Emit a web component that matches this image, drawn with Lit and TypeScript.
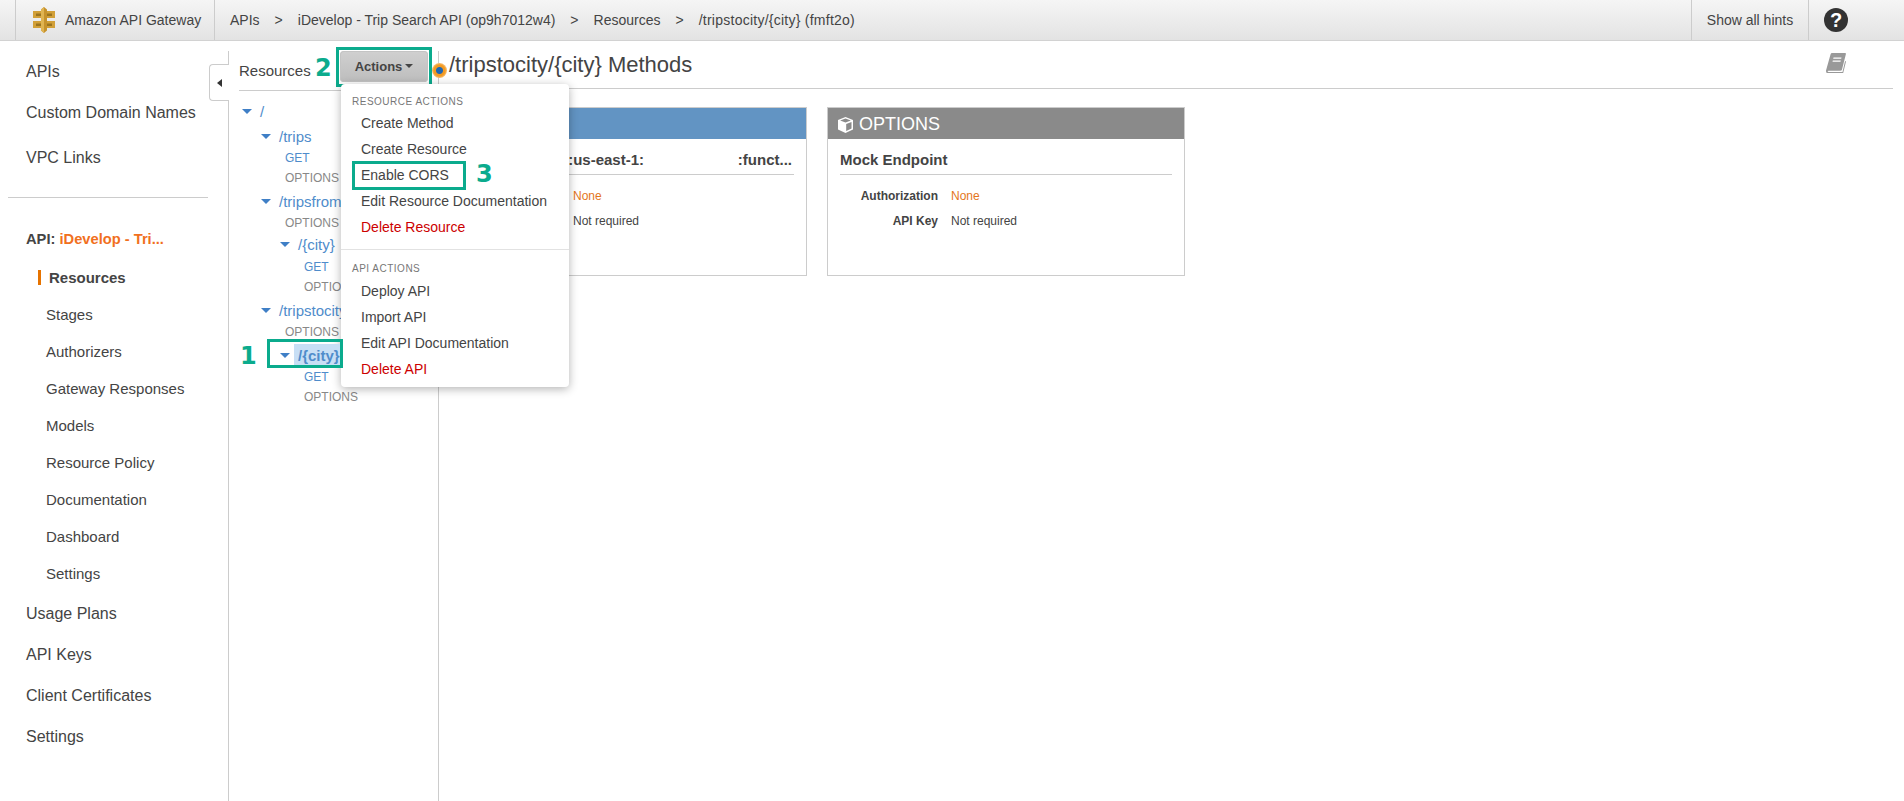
import {LitElement, css, html, nothing} from 'lit';
import {customElement} from 'lit/decorators.js';

interface TreeNode {
  path: string;
  methods: string[];
  children?: TreeNode[];
  selected?: boolean;
}

const TREE: TreeNode = {
  path: '/',
  methods: [],
  children: [
    {path: '/trips', methods: ['GET', 'OPTIONS']},
    {
      path: '/tripsfromcity',
      methods: ['OPTIONS'],
      children: [{path: '/{city}', methods: ['GET', 'OPTIONS']}]
    },
    {
      path: '/tripstocity',
      methods: ['OPTIONS'],
      children: [{path: '/{city}', methods: ['GET', 'OPTIONS'], selected: true}]
    }
  ]
};

const SUB_LINKS = ['Stages', 'Authorizers', 'Gateway Responses', 'Models', 'Resource Policy', 'Documentation', 'Dashboard', 'Settings'];

@customElement('app-root')
export class AppRoot extends LitElement {
  static styles = css`
    :host {
      display: block;
      height: 801px;
      overflow: hidden;
      background: #fff;
      color: #444;
      font-family: "Liberation Sans", Arial, sans-serif;
      font-size: 14px;
    }

    /* top bar */
    .top {
      display: flex;
      align-items: stretch;
      height: 40px;
      border-bottom: 1px solid #d2d2d2;
      background: linear-gradient(#f5f5f5, #e3e3e3);
      color: #444;
    }
    .brand {
      display: flex;
      align-items: center;
      margin-left: 15px;
      padding-left: 17px;
      border-left: 1px solid #ccc;
      border-right: 1px solid #ccc;
      box-sizing: border-box;
      width: 200px;
    }
    .brand svg { margin-right: 10px; }
    .crumbs {
      display: flex;
      align-items: center;
      flex: 1;
      padding-left: 15px;
    }
    .crumbs .sep { margin: 0 15px; }
    .crumbs .path { letter-spacing: 0.25px; }
    .hints {
      display: flex;
      align-items: center;
      justify-content: center;
      width: 116px;
      border-left: 1px solid #ccc;
      border-right: 1px solid #ccc;
    }
    .help {
      display: flex;
      align-items: center;
      justify-content: center;
      width: 24px;
      height: 24px;
      margin: 8px 56px 0 15px;
      border-radius: 50%;
      background: #333;
      color: #fff;
      font-size: 20px;
      font-weight: bold;
    }

    .body {
      display: flex;
      height: 750px;
      margin-top: 10px;
    }

    /* left nav */
    .side {
      position: relative;
      flex: none;
      width: 228px;
      border-right: 1px solid #ccc;
    }
    .link {
      height: 41px;
      line-height: 41px;
      padding-left: 26px;
      font-size: 16px;
    }
    .link.vpc { margin-top: 4px; }
    .link.usage { margin-top: 1px; }
    .side hr {
      height: 1px;
      margin: 19px 20px 23px 8px;
      border: 0;
      background: #ccc;
    }
    .api {
      height: 38px;
      line-height: 37px;
      padding-left: 26px;
      font-size: 14.7px;
      font-weight: bold;
    }
    .api span { color: #f1701e; }
    .sub {
      height: 37px;
      line-height: 37px;
      padding-left: 46px;
      font-size: 15px;
    }
    .sub.active {
      display: flex;
      align-items: center;
      padding-left: 38px;
      font-weight: bold;
    }
    .sub.active i {
      width: 3px;
      height: 15px;
      margin-right: 8px;
      background: #e67300;
    }
    .collapse {
      position: absolute;
      top: 13px;
      right: -1px;
      display: flex;
      align-items: center;
      justify-content: center;
      width: 19px;
      height: 35px;
      border: 1px solid #ccc;
      border-right: 0;
      border-radius: 4px 0 0 4px;
      background: #fff;
    }
    .collapse i {
      border: 4px solid transparent;
      border-left: 0;
      border-right: 5px solid #333;
    }

    /* resource tree */
    .tree {
      position: relative;
      z-index: 2;
      flex: none;
      width: 209px;
      border-right: 1px solid #ccc;
    }
    .tree-head {
      display: flex;
      height: 39px;
      margin-left: 10px;
      border-bottom: 1px solid #ccc;
    }
    .tree-title {
      width: 101px;
      line-height: 39px;
      font-size: 15px;
    }
    .actions {
      position: relative;
      z-index: 3;
      width: 88px;
      height: 31px;
    }
    .btn {
      display: flex;
      align-items: center;
      justify-content: center;
      height: 31px;
      border-radius: 4px;
      background: linear-gradient(#d0d0d0, #bdbdbd);
      box-shadow: inset 0 0 0 1px #c4c4c4;
      font-size: 13px;
      font-weight: bold;
      padding-bottom: 1px;
      box-sizing: border-box;
    }
    .btn i {
      margin-left: 3px;
      border: 4px solid transparent;
      border-bottom: 0;
      border-top: 4px solid #444;
    }

    .mark {
      position: absolute;
      border: 3px solid #0bab8d;
      pointer-events: none;
    }
    .num {
      position: absolute;
      color: #0bab8d;
      font-family: "DejaVu Sans", sans-serif;
      font-size: 24px;
      font-weight: bold;
      line-height: 25px;
    }
    .actions .mark { inset: -4px -4px -5px -4px; }
    .actions .num { left: -25px; top: 5px; }

    .menu {
      position: absolute;
      top: 33px;
      left: 1px;
      width: 228px;
      padding: 10px 0 5px;
      box-sizing: border-box;
      height: 303px;
      border-radius: 4px;
      background: #fff;
      box-shadow: 0 2px 10px rgba(0, 0, 0, 0.3);
    }
    .menu h6 {
      margin: 0;
      padding-left: 11px;
      height: 16px;
      line-height: 16px;
      font-size: 10px;
      font-weight: normal;
      letter-spacing: 0.5px;
      color: #777;
    }
    .menu hr {
      height: 1px;
      margin: 9px 0 11px;
      border: 0;
      background: #e2e2e2;
    }
    .menu hr + h6 { margin-bottom: 1px; }
    .item {
      position: relative;
      height: 26px;
      line-height: 26px;
      padding-left: 20px;
    }
    .item.danger { color: #cc0000; }
    .item .mark { inset: -1px auto 0 11px; width: 108px; height: 23px; }
    .item .num { left: 135px; top: 0; }

    .nodes {
      padding-top: 7px;
      margin-left: 10px;
    }
    .node { margin-top: 1px; }
    .node .node { margin-left: 19px; }
    .node.nested { margin-top: -1px; }
    .row {
      position: relative;
      display: flex;
      align-items: center;
      width: fit-content;
      height: 24px;
      color: #4f8ccb;
      font-size: 15px;
    }
    .node.nested > .row { margin-bottom: 1px; }
    .node.nested > .row.sel {
      z-index: 4;
      margin-top: 2px;
      margin-bottom: 0;
    }
    .row i {
      width: 0;
      margin: 0 8px 0 3px;
      border: 5px solid transparent;
      border-bottom: 0;
      border-top: 5px solid #3f7fc6;
    }
    .row.sel span {
      margin-left: -4px;
      padding: 0 2px 0 4px;
      line-height: 23px;
      background: #c8dff5;
      font-weight: bold;
    }
    .row .mark { inset: -4px -1px -1px -10px; }
    .row .num { left: -37px; top: 1px; }
    .method {
      width: fit-content;
      height: 20px;
      line-height: 20px;
      padding-left: 27px;
      font-size: 12px;
      color: #888;
    }
    .method.get { color: #4f8ccb; }
    .dot {
      position: absolute;
      right: -9px;
      top: 12px;
      width: 15px;
      height: 15px;
      border-radius: 50%;
      background: radial-gradient(circle, #1f66b4 0 3px, #f39a22 4px 5.5px, #f8c27a 7.5px);
    }

    /* methods */
    .main {
      position: relative;
      flex: 1;
      padding: 0 11px 0 10px;
    }
    .main-head {
      display: flex;
      justify-content: space-between;
      height: 37px;
      border-bottom: 1px solid #ccc;
    }
    .main-head h1 {
      margin: 0;
      line-height: 28px;
      font-size: 22px;
      font-weight: normal;
    }
    .book { margin: 2px 47px 0 0; }
    .cards {
      display: flex;
      gap: 20px;
      margin-top: 18px;
    }
    .card {
      width: 358px;
      height: 169px;
      box-sizing: border-box;
      border: 1px solid #ccc;
    }
    .card-head {
      display: flex;
      align-items: center;
      box-sizing: border-box;
      height: 31px;
      padding: 2px 0 0 10px;
      color: #fff;
      font-size: 18px;
    }
    .card-head svg { margin-right: 6px; }
    .get-head { background: #6294c3; }
    .opt-head { background: #8a8a8a; }
    .card-body { padding: 0 12px; }
    .card-title {
      display: flex;
      height: 20px;
      line-height: 20px;
      padding: 11px 0 4px;
      border-bottom: 1px solid #ccc;
      font-size: 15px;
      font-weight: bold;
    }
    .card-title .arn {
      display: flex;
      justify-content: flex-end;
      width: 182px;
      white-space: nowrap;
    }
    .card-title .fn { margin-left: auto; margin-right: 2px; }
    .kvs { padding-top: 9px; }
    .kv {
      display: flex;
      height: 25px;
      line-height: 25px;
      font-size: 12px;
    }
    .kv b { width: 98px; margin-right: 13px; text-align: right; }
    .none { color: #e4761b; }
  `;

  private renderNode(node: TreeNode, nested = false): unknown {
    return html`
      <div class="node ${nested ? 'nested' : ''}">
        <div class="row ${node.selected ? 'sel' : ''}">
          <i></i><span>${node.path}</span>
          ${node.selected ? html`<div class="mark"></div><div class="num">1</div>` : nothing}
        </div>
        ${node.methods.map(m => html`<div class="method ${m === 'GET' ? 'get' : ''}">${m}</div>`)}
        ${node.children?.map(c => this.renderNode(c, node.methods.length > 0))}
      </div>
    `;
  }

  private logo() {
    return html`
      <svg width="22" height="26" viewBox="0 0 22 26">
        <path fill="#d2a038" d="M0 4h8v7H0zM14 4h8v7h-8zM0 14h8v7H0zM14 14h8v7h-8z" />
        <path fill="#9a7420" d="M3 6.500h5V9H3zM14 6.500h5V9h-5zM3 16.500h5V19H3zM14 16.500h5V19h-5z" />
        <path fill="#c6922c" d="M8 2.500 11 0l3 2.500v21L11 26l-3-2.500z" />
        <path fill="#e0b452" d="M8 2.500 11 0v26l-3-2.500z" />
      </svg>
    `;
  }

  private kvs() {
    return html`
      <div class="kvs">
        <div class="kv"><b>Authorization</b><span class="none">None</span></div>
        <div class="kv"><b>API Key</b><span>Not required</span></div>
      </div>
    `;
  }

  render() {
    return html`
      <div class="top">
        <div class="brand">${this.logo()}Amazon API Gateway</div>
        <div class="crumbs">
          APIs<span class="sep">&gt;</span>iDevelop - Trip Search API (op9h7012w4)<span class="sep">&gt;</span>Resources<span class="sep">&gt;</span><span class="path">/tripstocity/{city} (fmft2o)</span>
        </div>
        <div class="hints">Show all hints</div>
        <div class="help">?</div>
      </div>

      <div class="body">
        <div class="side">
          <div class="link">APIs</div>
          <div class="link">Custom Domain Names</div>
          <div class="link vpc">VPC Links</div>
          <hr />
          <div class="api">API: <span>iDevelop - Tri...</span></div>
          <div class="sub active"><i></i>Resources</div>
          ${SUB_LINKS.map(s => html`<div class="sub">${s}</div>`)}
          <div class="link usage">Usage Plans</div>
          <div class="link">API Keys</div>
          <div class="link">Client Certificates</div>
          <div class="link">Settings</div>
          <div class="collapse"><i></i></div>
        </div>

        <div class="tree">
          <div class="tree-head">
            <div class="tree-title">Resources</div>
            <div class="actions">
              <div class="btn">Actions<i></i></div>
              <div class="mark"></div>
              <div class="num">2</div>
              <div class="menu">
                <h6>RESOURCE ACTIONS</h6>
                <div class="item">Create Method</div>
                <div class="item">Create Resource</div>
                <div class="item">Enable CORS<div class="mark"></div><div class="num">3</div></div>
                <div class="item">Edit Resource Documentation</div>
                <div class="item danger">Delete Resource</div>
                <hr />
                <h6>API ACTIONS</h6>
                <div class="item">Deploy API</div>
                <div class="item">Import API</div>
                <div class="item">Edit API Documentation</div>
                <div class="item danger">Delete API</div>
              </div>
            </div>
          </div>
          <div class="nodes">${this.renderNode(TREE)}</div>
          <div class="dot"></div>
        </div>

        <div class="main">
          <div class="main-head">
            <h1>/tripstocity/{city} Methods</h1>
            <svg class="book" width="20" height="20" viewBox="0 0 20 20">
              <path fill="#999" d="M6 0h13c1 0 1 1 .8 1.600L16 16.500c-.2.800-.8 1.200-1.600 1.200H2.500c-.6 0-.8.400-.8.600s.2.700.8.700h14l2.600-11 .9.500-3 12.300H2.500C1 20.500 0 19.500 0 18c0-.6.100-1 .3-1.600L4.500 1.500C4.800.5 5.300 0 6 0z" />
              <path fill="#fff" d="M7.500 4.500h8l-.3 1.300h-8zM6.800 7.500h8l-.3 1.300h-8z" />
            </svg>
          </div>
          <div class="cards">
            <div class="card">
              <div class="card-head get-head">GET</div>
              <div class="card-body">
                <div class="card-title"><span class="arn">arn:aws:lambda:us-east-1:</span><span class="fn">:funct...</span></div>
                ${this.kvs()}
              </div>
            </div>
            <div class="card">
              <div class="card-head opt-head">
                <svg width="15" height="16" viewBox="0 0 15 16">
                  <path fill="#fff" d="M7.500 0 15 3v9.500L7.500 16 0 12.500V3z" />
                  <path fill="#8a8a8a" d="M7.500 1.500 12.800 3.500 7.500 5.500 2.200 3.500zM8.200 7l5.300-2v6.600L8.200 14.100z" />
                </svg>
                OPTIONS
              </div>
              <div class="card-body">
                <div class="card-title">Mock Endpoint</div>
                ${this.kvs()}
              </div>
            </div>
          </div>
        </div>
      </div>
    `;
  }
}
